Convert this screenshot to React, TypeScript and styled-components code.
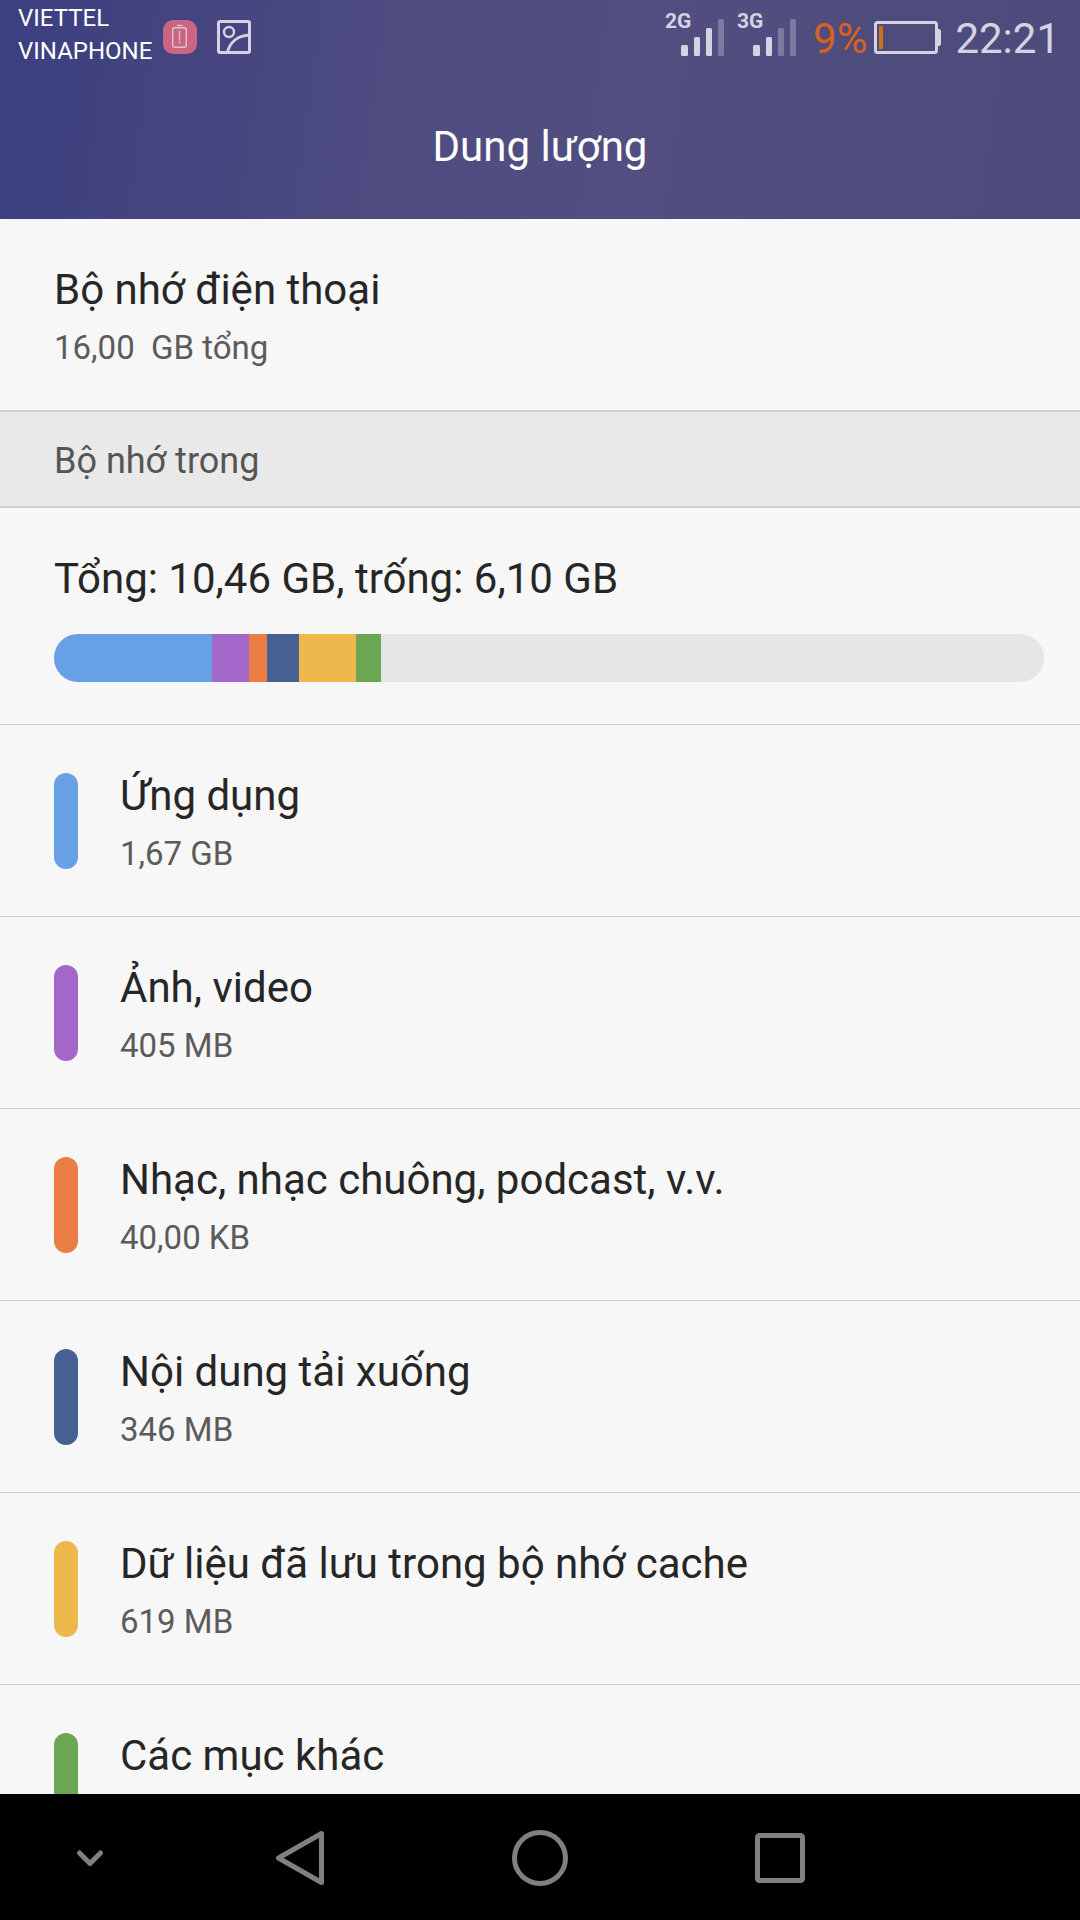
import React from "react";
import styled, { createGlobalStyle } from "styled-components";

const GlobalStyle = createGlobalStyle`
  *, *::before, *::after { box-sizing: border-box; }
  body {
    margin: 0;
    background: #f7f7f7;
    color: #262626;
    font-family: Roboto, "Noto Sans", sans-serif;
  }
`;

const Screen = styled.div`
  display: flex;
  flex-direction: column;
  height: 100vh;
  overflow: hidden;
`;

const Header = styled.header`
  flex: none;
  background: linear-gradient(98deg, #3b4080 0%, #444480 16%, #4d4b80 36%, #524e81 58%, #4e4c7d 80%, #4d4b7b 100%);
`;

const StatusBar = styled.div`
  display: flex;
  justify-content: space-between;
  height: 74px;
  padding: 0 20px 0 18px;
  color: #d5d3e3;
`;

const StatusGroup = styled.div`
  display: flex;
  align-items: center;
`;

const Carriers = styled.div`
  margin-right: 11px;
  padding-bottom: 4px;
  color: #ffffff;
  font-size: 24px;
  line-height: 33px;
`;

const NoticeIcon = styled.svg`
  display: block;
  width: 34px;
  height: 34px;
  margin-right: 20px;
`;

const Signals = styled.div`
  display: flex;
  margin-right: 4px;
`;

const Signal = styled.div`
  display: flex;
  align-items: flex-start;
  width: 72px;
  height: 56px;
`;

const NetworkType = styled.span`
  width: 16px;
  font-size: 21px;
  font-weight: 700;
  line-height: 24px;
`;

const SignalBars = styled.svg`
  display: block;
  flex: none;
  width: 44px;
  height: 37px;
  margin-top: 10px;
`;

const StatusText = styled.span<{ $color?: string }>`
  padding-top: 4px;
  color: ${(p) => p.$color ?? "inherit"};
  font-size: 42px;
  line-height: 48px;
`;

const BatteryIcon = styled.svg`
  display: block;
  width: 68px;
  height: 34px;
  margin: 0 13px 0 7px;
`;

const PageTitle = styled.h1`
  margin: 0;
  color: #ffffff;
  font-size: 42px;
  font-weight: 400;
  line-height: 145px;
  text-align: center;
`;

const Content = styled.main`
  flex: 1;
  min-height: 0;
  overflow-y: auto;
  scrollbar-width: none;
`;

const Texts = styled.div`
  display: flex;
  flex-direction: column;
  gap: 3px;
  min-height: 113px;
`;

const ItemTitle = styled.h2`
  margin: 0;
  font-size: 42px;
  font-weight: 400;
  line-height: 64px;
`;

const ItemDetail = styled.p`
  margin: 0;
  color: #5b5b5b;
  font-size: 33px;
  line-height: 46px;
`;

const Row = styled.div`
  display: flex;
  align-items: center;
  gap: 42px;
  padding: 39px 36px 39px 54px;
`;

const SectionHeading = styled.h2`
  margin: 0;
  padding: 4px 54px 0;
  border: solid #cfcfcf;
  border-width: 2px 0;
  background: #e9e9e9;
  color: #555555;
  font-size: 36px;
  font-weight: 400;
  line-height: 90px;
`;

const Summary = styled.section`
  display: flex;
  flex-direction: column;
  gap: 23px;
  padding: 39px 36px 42px 54px;
`;

const UsageBar = styled.div`
  display: flex;
  height: 48px;
  overflow: hidden;
  border-radius: 24px;
  background: #e5e5e5;
`;

const Segment = styled.div<{ $color: string }>`
  flex: none;
  min-width: 18px;
  background: ${(p) => p.$color};
`;

const CategoryList = styled.ul`
  margin: 0;
  padding: 0;
  list-style: none;
`;

const Category = styled.li`
  border-top: 1px solid #cfcfcf;
`;

const Marker = styled.span<{ $color: string }>`
  flex: none;
  width: 24px;
  height: 96px;
  border-radius: 12px;
  background: ${(p) => p.$color};
`;

const NavBar = styled.nav`
  display: grid;
  flex: none;
  grid-template-columns: 3fr 4fr 4fr 4fr 3fr;
  height: 126px;
  padding-top: 2px;
  background: #000000;
`;

const NavButton = styled.button`
  display: flex;
  align-items: center;
  justify-content: center;
  padding: 0;
  border: 0;
  background: transparent;
  color: #808080;
`;

const NavIcon = styled.svg`
  display: block;
  width: 60px;
  height: 60px;
  fill: none;
  stroke: currentColor;
  stroke-width: 5;
  stroke-linecap: round;
  stroke-linejoin: round;
`;

const TOTAL_GB = 10.46;

const categories = [
  { name: "Ứng dụng", size: "1,67 GB", gb: 1.67, color: "#68a0e5" },
  { name: "Ảnh, video", size: "405 MB", gb: 0.395, color: "#a367c9" },
  { name: "Nhạc, nhạc chuông, podcast, v.v.", size: "40,00 KB", gb: 0, color: "#e97d43" },
  { name: "Nội dung tải xuống", size: "346 MB", gb: 0.338, color: "#466092" },
  { name: "Dữ liệu đã lưu trong bộ nhớ cache", size: "619 MB", gb: 0.595, color: "#edb94c" },
  { name: "Các mục khác", gb: 0.264, color: "#6ba653" },
];

const signalShapes = [
  { x: 0, width: 7, height: 11 },
  { x: 13, width: 6, height: 19 },
  { x: 25, width: 6, height: 28 },
  { x: 37, width: 6, height: 37 },
];

function SignalMeter({ type, level }: { type: string; level: number }) {
  return (
    <Signal>
      <NetworkType>{type}</NetworkType>
      <SignalBars viewBox="0 0 44 37" fill="currentColor" aria-hidden="true">
        {signalShapes.map((bar, i) => (
          <rect
            key={bar.x}
            x={bar.x}
            y={37 - bar.height}
            width={bar.width}
            height={bar.height}
            rx="1.5"
            opacity={i < level ? 1 : 0.33}
          />
        ))}
      </SignalBars>
    </Signal>
  );
}

export default function App() {
  return (
    <Screen>
      <GlobalStyle />
      <Header>
        <StatusBar>
          <StatusGroup>
            <Carriers>
              <div>VIETTEL</div>
              <div>VINAPHONE</div>
            </Carriers>
            <NoticeIcon viewBox="0 0 34 34" fill="none" aria-hidden="true">
              <rect width="34" height="34" rx="10" fill="#cb6682" />
              <rect x="9.7" y="7.7" width="13.6" height="19.6" rx="2" stroke="#e0c3d2" strokeWidth="1.4" />
              <path d="M14 5.5h5.5" stroke="#e0c3d2" strokeWidth="1.4" />
              <path d="M16.5 11v9.5M16.5 21.5v2" stroke="#e0c3d2" strokeWidth="1.2" />
            </NoticeIcon>
            <NoticeIcon viewBox="0 0 34 34" fill="none" stroke="#d5d3e3" aria-hidden="true">
              <rect x="1.5" y="1.5" width="31" height="31" rx="1.5" strokeWidth="3" />
              <circle cx="12" cy="12" r="5" strokeWidth="2.4" />
              <path d="M10.5 32C13 22 21 15.5 33 15" strokeWidth="3" />
            </NoticeIcon>
          </StatusGroup>
          <StatusGroup>
            <Signals>
              <SignalMeter type="2G" level={3} />
              <SignalMeter type="3G" level={2} />
            </Signals>
            <StatusText $color="#d8611f">9%</StatusText>
            <BatteryIcon viewBox="0 0 68 34" fill="none" aria-hidden="true">
              <rect x="1.5" y="2.5" width="61" height="30" rx="2" stroke="#d5d3e3" strokeWidth="3" />
              <path d="M63 9h2.5l1.500 1.500v14l-1.500 1.500H63z" fill="#d5d3e3" />
              <rect x="5" y="6" width="4" height="23" fill="#cb711c" />
            </BatteryIcon>
            <StatusText>22:21</StatusText>
          </StatusGroup>
        </StatusBar>
        <PageTitle>Dung lượng</PageTitle>
      </Header>

      <Content>
        <Row>
          <Texts>
            <ItemTitle>Bộ nhớ điện thoại</ItemTitle>
            <ItemDetail>{"16,00\u00a0 GB tổng"}</ItemDetail>
          </Texts>
        </Row>
        <SectionHeading>Bộ nhớ trong</SectionHeading>
        <Summary>
          <ItemTitle>Tổng: 10,46 GB, trống: 6,10 GB</ItemTitle>
          <UsageBar>
            {categories.map((c) => (
              <Segment key={c.name} $color={c.color} style={{ width: `${(c.gb / TOTAL_GB) * 100}%` }} />
            ))}
          </UsageBar>
        </Summary>
        <CategoryList>
          {categories.map((c) => (
            <Category key={c.name}>
              <Row>
                <Marker $color={c.color} />
                <Texts>
                  <ItemTitle>{c.name}</ItemTitle>
                  {c.size && <ItemDetail>{c.size}</ItemDetail>}
                </Texts>
              </Row>
            </Category>
          ))}
        </CategoryList>
      </Content>

      <NavBar>
        <NavButton type="button" aria-label="Ẩn thanh điều hướng">
          <NavIcon viewBox="0 0 60 60">
            <path d="M19.5 25L30 35.5L40.5 25" />
          </NavIcon>
        </NavButton>
        <NavButton type="button" aria-label="Quay lại">
          <NavIcon viewBox="0 0 60 60">
            <path d="M51.5 5.5V54.5L8.5 30Z" />
          </NavIcon>
        </NavButton>
        <NavButton type="button" aria-label="Màn hình chính">
          <NavIcon viewBox="0 0 60 60">
            <circle cx="30" cy="30" r="25.5" />
          </NavIcon>
        </NavButton>
        <NavButton type="button" aria-label="Ứng dụng gần đây">
          <NavIcon viewBox="0 0 60 60">
            <rect x="7.5" y="7.5" width="45" height="45" rx="2" />
          </NavIcon>
        </NavButton>
      </NavBar>
    </Screen>
  );
}
